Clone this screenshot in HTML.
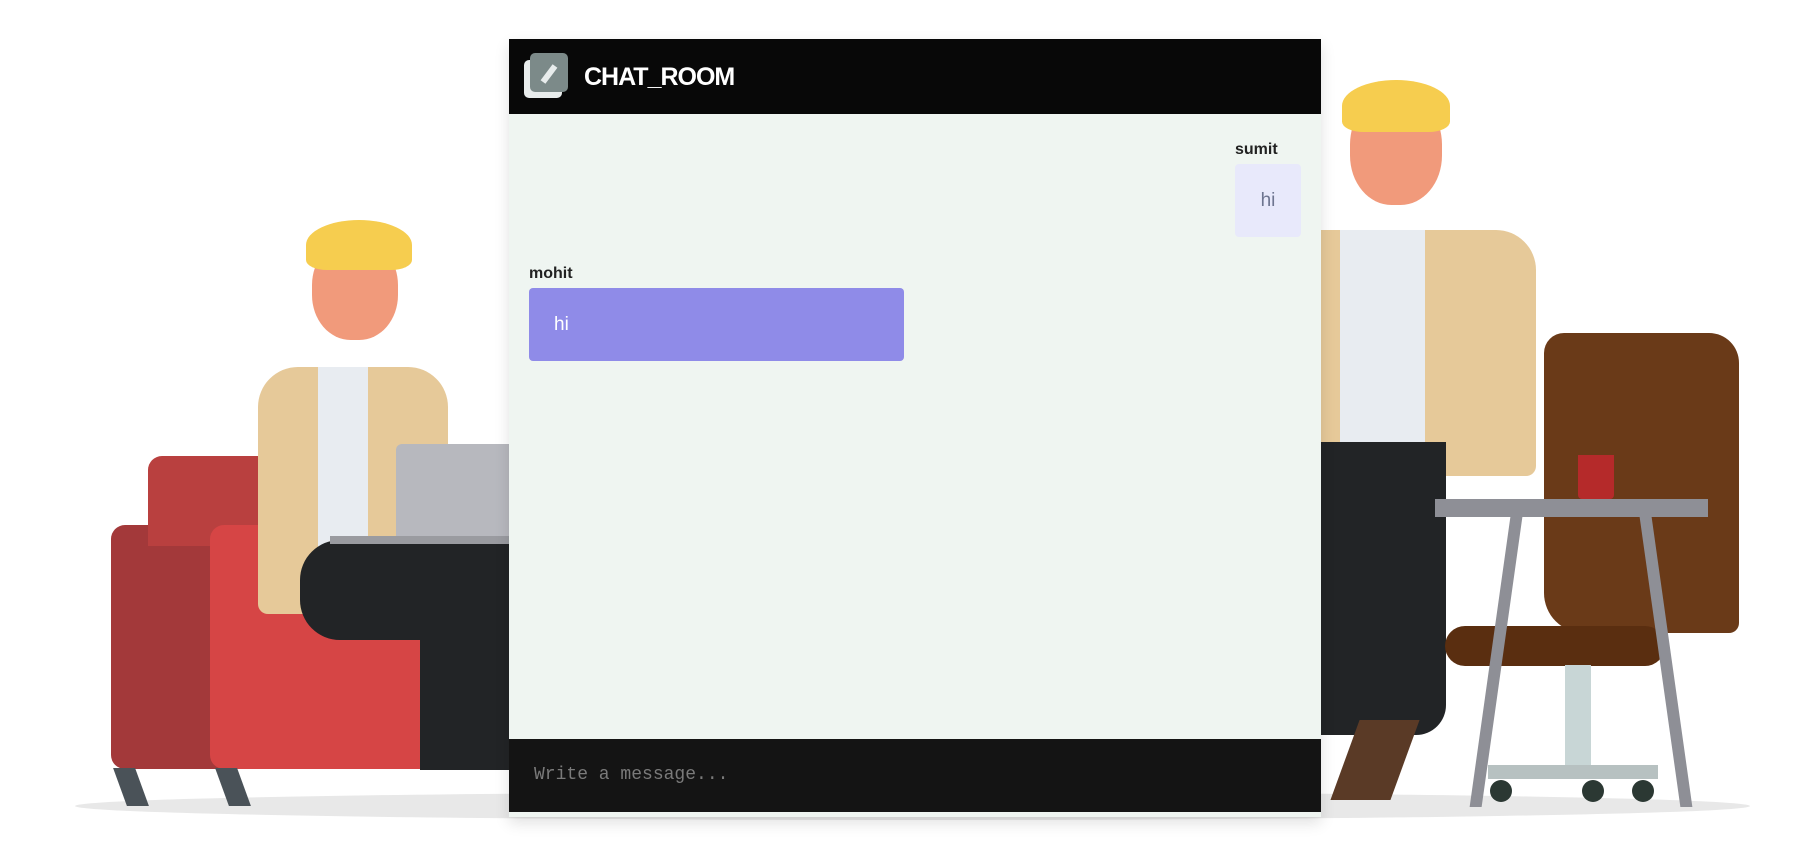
<!DOCTYPE html>
<html><head><meta charset="utf-8"><style>
*{margin:0;padding:0;box-sizing:border-box}
body{width:1800px;height:848px;overflow:hidden;background:#fff;position:relative;font-family:"Liberation Sans",Arial,sans-serif}
.a{position:absolute}
</style></head><body>
<!-- floor -->
<div class="a" style="left:75px;top:792px;width:1675px;height:28px;border-radius:50%;background:#e8e8e8"></div>
<!-- left sofa -->
<div class="a" style="left:111px;top:525px;width:120px;height:244px;background:#a3393a;border-radius:14px"></div>
<div class="a" style="left:148px;top:456px;width:361px;height:90px;background:#b9403f;border-radius:14px 0 0 0"></div>
<div class="a" style="left:210px;top:525px;width:299px;height:244px;background:#d64545;border-radius:14px"></div>
<div class="a" style="left:120px;top:768px;width:22px;height:38px;background:#4a5258;transform:skewX(20deg)"></div>
<div class="a" style="left:222px;top:768px;width:22px;height:38px;background:#4a5258;transform:skewX(20deg)"></div>
<!-- left man -->
<div class="a" style="left:258px;top:367px;width:190px;height:247px;background:#e6c999;border-radius:40px 40px 10px 10px"></div>
<div class="a" style="left:318px;top:367px;width:50px;height:200px;background:#e8ecf1"></div>
<div class="a" style="left:300px;top:540px;width:209px;height:100px;background:#222426;border-radius:40px 0 0 40px"></div>
<div class="a" style="left:420px;top:590px;width:89px;height:180px;background:#222426"></div>
<div class="a" style="left:312px;top:240px;width:86px;height:100px;background:#f19a7b;border-radius:45%"></div>
<div class="a" style="left:306px;top:220px;width:106px;height:50px;background:#f6cd4f;border-radius:50% 50% 20% 20%"></div>
<div class="a" style="left:396px;top:444px;width:113px;height:98px;background:#b7b8be;border-radius:6px 0 0 0"></div>
<div class="a" style="left:330px;top:536px;width:179px;height:8px;background:#9a9ba0"></div>
<!-- right man -->
<div class="a" style="left:1321px;top:230px;width:215px;height:246px;background:#e6c999;border-radius:0 40px 10px 10px"></div>
<div class="a" style="left:1340px;top:230px;width:85px;height:220px;background:#e8ecf1"></div>
<div class="a" style="left:1321px;top:442px;width:125px;height:293px;background:#222426;border-radius:0 0 30px 0"></div>
<div class="a" style="left:1345px;top:720px;width:60px;height:80px;background:#5a3a26;transform:skewX(-20deg)"></div>
<div class="a" style="left:1350px;top:95px;width:92px;height:110px;background:#f19a7b;border-radius:45%"></div>
<div class="a" style="left:1342px;top:80px;width:108px;height:52px;background:#f6cd4f;border-radius:50% 50% 20% 20%"></div>
<!-- chair & desk -->
<div class="a" style="left:1544px;top:333px;width:195px;height:300px;background:#6a3a18;border-radius:20px 30px 10px 40px"></div>
<div class="a" style="left:1445px;top:626px;width:220px;height:40px;background:#5a2e10;border-radius:20px"></div>
<div class="a" style="left:1565px;top:665px;width:26px;height:110px;background:#c8d6d6"></div>
<div class="a" style="left:1488px;top:765px;width:170px;height:14px;background:#b7c1c1"></div>
<div class="a" style="left:1490px;top:780px;width:22px;height:22px;border-radius:50%;background:#2b3833"></div>
<div class="a" style="left:1582px;top:780px;width:22px;height:22px;border-radius:50%;background:#2b3833"></div>
<div class="a" style="left:1632px;top:780px;width:22px;height:22px;border-radius:50%;background:#2b3833"></div>
<div class="a" style="left:1435px;top:499px;width:273px;height:18px;background:#8e8f96"></div>
<div class="a" style="left:1490px;top:517px;width:12px;height:290px;background:#8e8f96;transform:skewX(-8deg)"></div>
<div class="a" style="left:1660px;top:517px;width:12px;height:290px;background:#8e8f96;transform:skewX(8deg)"></div>
<div class="a" style="left:1578px;top:455px;width:36px;height:44px;background:#b52a2a;border-radius:0 0 4px 4px"></div>
<!-- chat -->
<div class="a" style="left:509px;top:39px;width:812px;height:778px;background:#eff5f1;box-shadow:0 6px 14px rgba(0,0,0,.12)"></div>
<div class="a" style="left:509px;top:39px;width:812px;height:75px;background:#080808"></div>
<div class="a" style="left:524px;top:60px;width:38px;height:38px;background:#e8ecec;border-radius:5px"></div>
<div class="a" style="left:530px;top:53px;width:38px;height:39px;background:#7c8a89;border-radius:5px"></div>
<svg class="a" style="left:530px;top:53px" width="38" height="39"><path d="M13 29 L25 13" stroke="#e8ecec" stroke-width="6" stroke-linecap="butt"/></svg>
<div class="a" style="left:584px;top:63px;color:#fff;font-size:25px;font-weight:bold;letter-spacing:-1px">CHAT_ROOM</div>
<div class="a" style="left:1235px;top:141px;font-size:16px;font-weight:bold;color:#222">sumit</div>
<div class="a" style="left:1235px;top:164px;width:66px;height:73px;background:#e8e9fb;border-radius:4px;color:#6e7590;font-size:19px;line-height:73px;text-align:center">hi</div>
<div class="a" style="left:529px;top:265px;font-size:16px;font-weight:bold;color:#222">mohit</div>
<div class="a" style="left:529px;top:288px;width:375px;height:73px;background:#8f8be8;border-radius:4px;color:#fff;font-size:19px;line-height:73px;padding-left:25px">hi</div>
<div class="a" style="left:509px;top:739px;width:812px;height:73px;background:#141414"></div>
<div class="a" style="left:534px;top:765px;font-family:'Liberation Mono',monospace;font-size:18px;color:#7a7a7a">Write a message...</div>
</body></html>
